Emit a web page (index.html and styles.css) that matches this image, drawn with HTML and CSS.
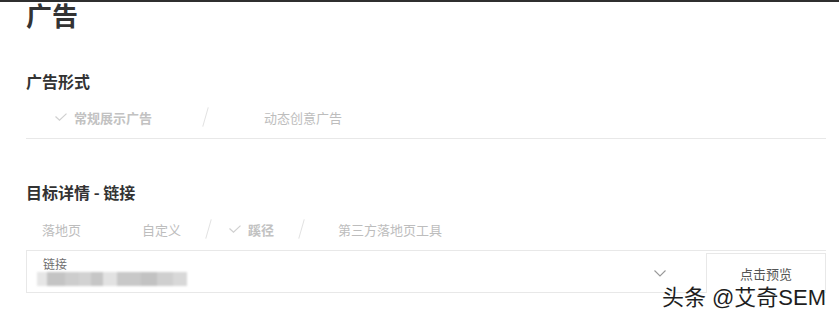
FILE: index.html
```html
<!DOCTYPE html>
<html lang="zh">
<head>
    <meta charset="UTF-8">
    <meta name="viewport" content="width=device-width, initial-scale=1.0">
    <title>广告</title>
    <link rel="stylesheet" href="styles.css">
</head>
<body>
    <div class="page">
        <h1>广告</h1>

        <h2 class="section-title">广告形式</h2>
        <div class="tabs tabs-format">
            <div class="tab active">
                <svg class="check" width="12" height="8" viewBox="0 0 12 8"><path d="M0.5 3.5 L4.5 7.2 L11.5 0.6" fill="none" stroke="#d0d0d0" stroke-width="1.2"/></svg>
                常规展示广告
            </div>
            <span class="sep"></span>
            <div class="tab">动态创意广告</div>
        </div>

        <h2 class="section-title">目标详情 - 链接</h2>
        <div class="tabs tabs-target">
            <div class="tab">落地页</div>
            <div class="tab">自定义</div>
            <span class="sep"></span>
            <div class="tab active">
                <svg class="check" width="12" height="8" viewBox="0 0 12 8"><path d="M0.5 3.5 L4.5 7.2 L11.5 0.6" fill="none" stroke="#d0d0d0" stroke-width="1.2"/></svg>
                蹊径
            </div>
            <span class="sep"></span>
            <div class="tab">第三方落地页工具</div>
        </div>

        <div class="link-row">
            <div class="field">
                <div class="field-label">链接</div>
                <div class="field-value">
                    <span style="width:10px;background:#e6e6e6"></span>
                    <span style="width:18px;background:#c4c4c4"></span>
                    <span style="width:14px;background:#cdcdcd"></span>
                    <span style="width:12px;background:#d2d2d2"></span>
                    <span style="width:12px;background:#c6c6c6"></span>
                    <span style="width:14px;background:#e2e2e2"></span>
                    <span style="width:24px;background:#c8c8c8"></span>
                    <span style="width:16px;background:#c2c2c2"></span>
                    <span style="width:16px;background:#cfcfcf"></span>
                    <span style="width:14px;background:#d8d8d8"></span>
                </div>
                <svg class="chevron" width="12" height="7" viewBox="0 0 12 7"><path d="M0.5 0.5 L6 6 L11.5 0.5" fill="none" stroke="#999" stroke-width="1.1"/></svg>
            </div>
            <div class="preview-btn">点击预览</div>
        </div>
    </div>

    <div class="watermark">头条 @艾奇SEM</div>
</body>
</html>
```

FILE: styles.css
```css
body {
    margin: 0;
    border-top: 2px solid #2f2f2f;
    font-family: "Noto Sans CJK SC", "Liberation Sans", sans-serif;
    background-color: #fff;
    color: #333;
}
.page {
    padding: 0 13px 0 26px;
}
h1 {
    margin: 0;
    font-size: 26px;
    line-height: 26px;
    font-weight: bold;
    color: #333;
}
.section-title {
    margin: 41px 0 0;
    font-size: 16px;
    line-height: 24px;
    font-weight: bold;
    color: #333;
}
.tabs {
    display: flex;
    align-items: center;
    height: 42px;
    margin-top: 3px;
    border-bottom: 1px solid #e8e8e8;
    font-size: 13px;
    color: #bdbdbd;
}
.tabs-target {
    margin-top: 4px;
}
.tab {
    display: flex;
    align-items: center;
    white-space: nowrap;
}
.tab.active {
    font-weight: bold;
    color: #c2c2c2;
}
.check {
    margin-right: 7px;
}
.sep {
    display: inline-block;
    width: 1px;
    height: 20px;
    background-color: #e2e2e2;
    transform: rotate(16deg);
}
.tabs-format .tab:first-child {
    margin-left: 29px;
}
.tabs-format .sep {
    margin: 0 58px 0 53px;
}
.tabs-target .tab:first-child {
    margin-left: 16px;
}
.tabs-target .tab:nth-child(2) {
    margin-left: 61px;
}
.tabs-target .sep {
    margin: 0 20px 0 27px;
}
.tabs-target .sep:last-of-type {
    margin: 0 36px 0 27px;
}
.link-row {
    display: flex;
}
.field {
    position: relative;
    flex: 1;
    height: 42px;
    padding-left: 16px;
    border-left: 1px solid #e8e8e8;
    border-bottom: 1px solid #e8e8e8;
    box-sizing: border-box;
}
.field-label {
    margin-top: 6px;
    font-size: 12px;
    line-height: 13px;
    color: #6f6f6f;
}
.field-value {
    display: flex;
    height: 14px;
    margin-top: 2px;
    margin-left: -6px;
    filter: blur(0.8px);
}
.field-value span {
    display: block;
    height: 14px;
}
.chevron {
    position: absolute;
    right: 40px;
    top: 19px;
}
.preview-btn {
    width: 120px;
    height: 40px;
    margin-top: 2px;
    border: 1px solid #e8e8e8;
    border-bottom: none;
    box-sizing: border-box;
    display: flex;
    align-items: center;
    justify-content: center;
    font-size: 13px;
    color: #555;
}
.watermark {
    position: absolute;
    right: 13px;
    top: 284px;
    font-family: "Liberation Sans", "Noto Sans CJK SC", sans-serif;
    font-size: 22px;
    line-height: 28px;
    color: #1e1e1e;
    text-shadow: 0 0 2px #fff, 0 0 2px #fff;
    white-space: nowrap;
}
```
